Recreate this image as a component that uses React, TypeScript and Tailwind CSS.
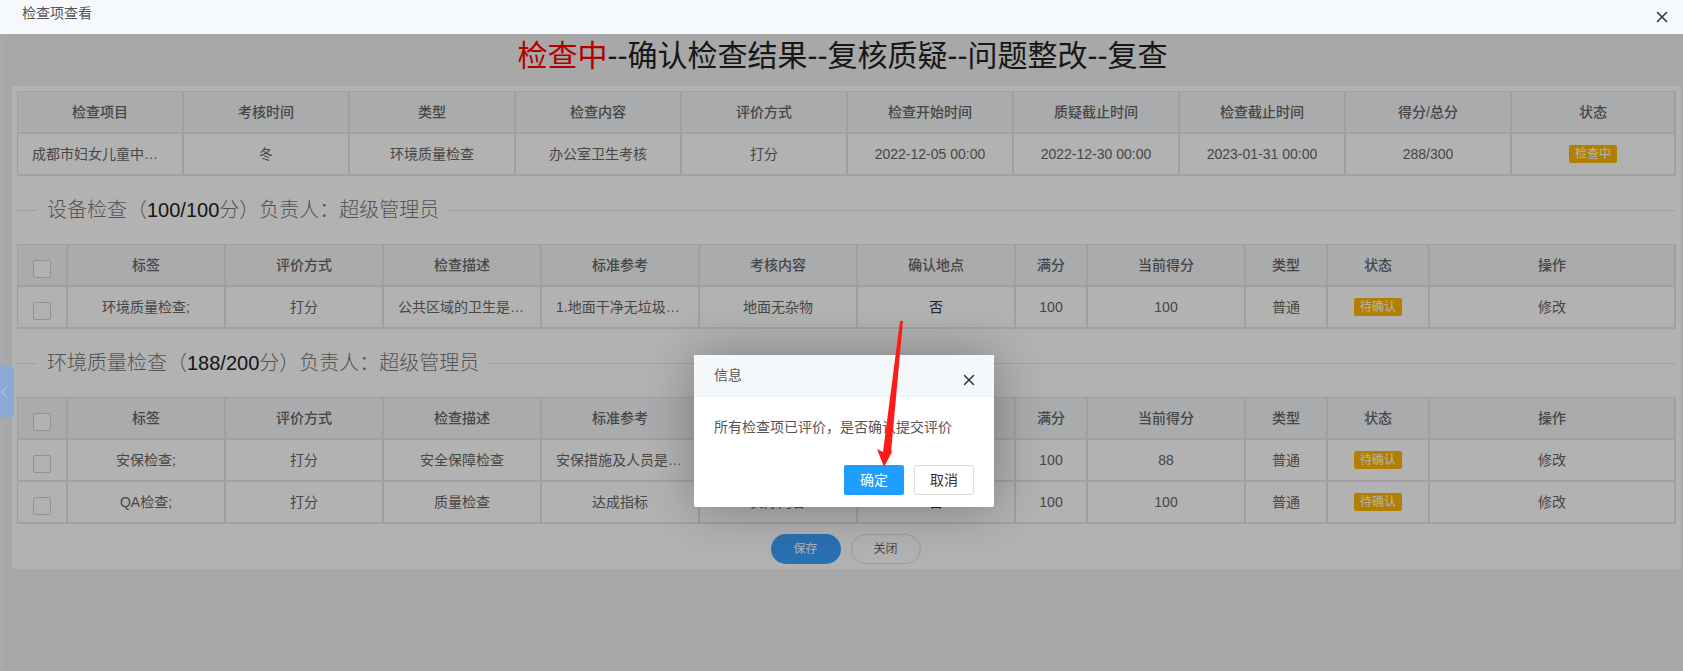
import { FC, ReactNode } from "react";
import { ChevronLeft, X } from "lucide-react";

const cell =
  "flex h-10.5 min-w-0 items-center justify-center border-r-2 border-b-2 border-[#e6e6e6] px-3.5 text-sm text-[#666]";
const head = "bg-[#f2f5f8]";
const detailGrid = "grid grid-cols-[50px_repeat(6,158px)_72px_158px_82px_102px_1fr] border-t border-l border-[#e6e6e6]";

const detailHead = ["标签", "评价方式", "检查描述", "标准参考", "考核内容", "确认地点", "满分", "当前得分", "类型", "状态", "操作"];

const Tag: FC<{ children: ReactNode }> = ({ children }) => (
  <span className="rounded-xs bg-[#ffb800] px-1.5 text-xs leading-4.5 text-white">{children}</span>
);

const CheckCell: FC<{ isHead?: boolean }> = ({ isHead }) => (
  <div className={`${cell} ${isHead ? head : ""}`}>
    <div className="mt-2 h-4.5 w-4.5 shrink-0 rounded-xs border border-[#d2d2d2] bg-white" />
  </div>
);

const Text: FC<{ children: ReactNode }> = ({ children }) => <div className={cell}><span className="truncate">{children}</span></div>;

const Legend: FC<{ name: string; score: string }> = ({ name, score }) => (
  <div className="flex h-17 items-center">
    <div className="h-px w-5 bg-[#e6e6e6]" />
    <div className="px-2.5 text-xl font-light text-[#777]">
      {name}（<span className="text-[#222]">{score}</span>分）负责人：超级管理员
    </div>
    <div className="h-px flex-1 bg-[#e6e6e6]" />
  </div>
);

const DetailTable: FC<{ rows: string[][] }> = ({ rows }) => (
  <div className={detailGrid}>
    <CheckCell isHead />
    {detailHead.map((h) => (
      <div key={h} className={`${cell} ${head} font-medium`}>{h}</div>
    ))}
    {rows.map((r) => (
      <div key={r[0]} className="contents">
        <CheckCell />
        {r.map((v, i) => (
          <Text key={i}>{v === "否" ? <span className="text-[#333]">{v}</span> : v}</Text>
        ))}
        <div className={cell}><Tag>待确认</Tag></div>
        <Text>修改</Text>
      </div>
    ))}
  </div>
);

export default function App() {
  return (
    <div className="relative flex h-screen flex-col overflow-hidden bg-[#f1f1f1] font-['Liberation_Sans','Noto_Sans_CJK_SC',sans-serif] text-[#333]">
      <div className="flex h-8.5 shrink-0 items-center justify-between bg-[#f5f9fd] pr-3 pl-5.5">
        <span className="mb-2 text-sm text-[#555]">检查项查看</span>
        <X size={18} strokeWidth={2} />
      </div>

      <div className="flex flex-1">
        <div className="w-0.5 bg-blue-50" />
        <div className="min-w-0 flex-1">
          <h1 className="pt-1.5 pb-3.5 text-center text-3xl leading-8 text-[#222]">
            <span className="text-[#ff0000]">检查中</span>--确认检查结果--复核质疑--问题整改--复查
          </h1>

          <div className="mr-0.5 ml-2.5 border border-white bg-white p-1">
            <div className="grid grid-cols-[repeat(9,166px)_1fr] border-t border-l border-[#e6e6e6]">
              {["检查项目", "考核时间", "类型", "检查内容", "评价方式", "检查开始时间", "质疑截止时间", "检查截止时间", "得分/总分", "状态"].map((h) => (
                <div key={h} className={`${cell} ${head} font-medium`}>{h}</div>
              ))}
              {["成都市妇女儿童中心医院", "冬", "环境质量检查", "办公室卫生考核", "打分", "2022-12-05 00:00", "2022-12-30 00:00", "2023-01-31 00:00", "288/300"].map((v) => (
                <Text key={v}>{v}</Text>
              ))}
              <div className={cell}><Tag>检查中</Tag></div>
            </div>

            <Legend name="设备检查" score="100/100" />
            <DetailTable rows={[["环境质量检查;", "打分", "公共区域的卫生是否干净", "1.地面干净无垃圾，无杂物", "地面无杂物", "否", "100", "100", "普通"]]} />

            <Legend name="环境质量检查" score="188/200" />
            <DetailTable
              rows={[
                ["安保检查;", "打分", "安全保障检查", "安保措施及人员是否到位", "安全措施", "否", "100", "88", "普通"],
                ["QA检查;", "打分", "质量检查", "达成指标", "实际内容", "否", "100", "100", "普通"],
              ]}
            />

            <div className="mt-2.5 flex justify-center gap-2.5 pr-0.5">
              <button className="h-7.5 w-17.5 rounded-full bg-[#3ca3ff] text-xs text-white">保存</button>
              <button className="h-7.5 w-17.5 rounded-full border border-[#dedede] bg-white text-xs text-[#666]">关闭</button>
            </div>
          </div>
        </div>
      </div>

      {/* shade sits under the title bar's bottom edge, everything below is dimmed */}
      <div className="absolute inset-x-0 top-8.5 bottom-0 bg-black/30" />

      <div className="absolute top-[366px] left-0 flex h-13 w-3.5 items-center rounded-r-sm bg-[#8aa9d4] text-[#c5d5ea]">
        <ChevronLeft size={24} strokeWidth={1} className="-ml-1.5" />
      </div>

      <div className="absolute top-[355px] left-[694px] w-[300px] rounded-xs bg-white shadow-[1px_1px_50px_rgba(0,0,0,0.3)]">
        <div className="flex h-10.5 items-center justify-between border-b border-[#eee] bg-[#f5f8fb] pr-4 pl-5 text-sm text-[#555]">
          <span className="mb-0.5">信息</span>
          <X size={18} strokeWidth={2} className="mt-2 text-[#333]" />
        </div>
        <div className="p-5 text-sm leading-5 text-[#555]">所有检查项已评价，是否确认提交评价</div>
        <div className="flex justify-end gap-2.5 pt-2 pr-5 pb-3 text-sm">
          <button className="h-7.5 w-15 rounded-xs bg-[#1e9fff] text-white">确定</button>
          <button className="h-7.5 w-15 rounded-xs border border-[#dedede] bg-white">取消</button>
        </div>
      </div>

      <svg className="absolute top-0 left-0" width="1683" height="671" fill="#ff1a1a">
        <polygon points="884,467 877,449 883,452 900,321 903,321 891,452 893,450" />
      </svg>
    </div>
  );
}
